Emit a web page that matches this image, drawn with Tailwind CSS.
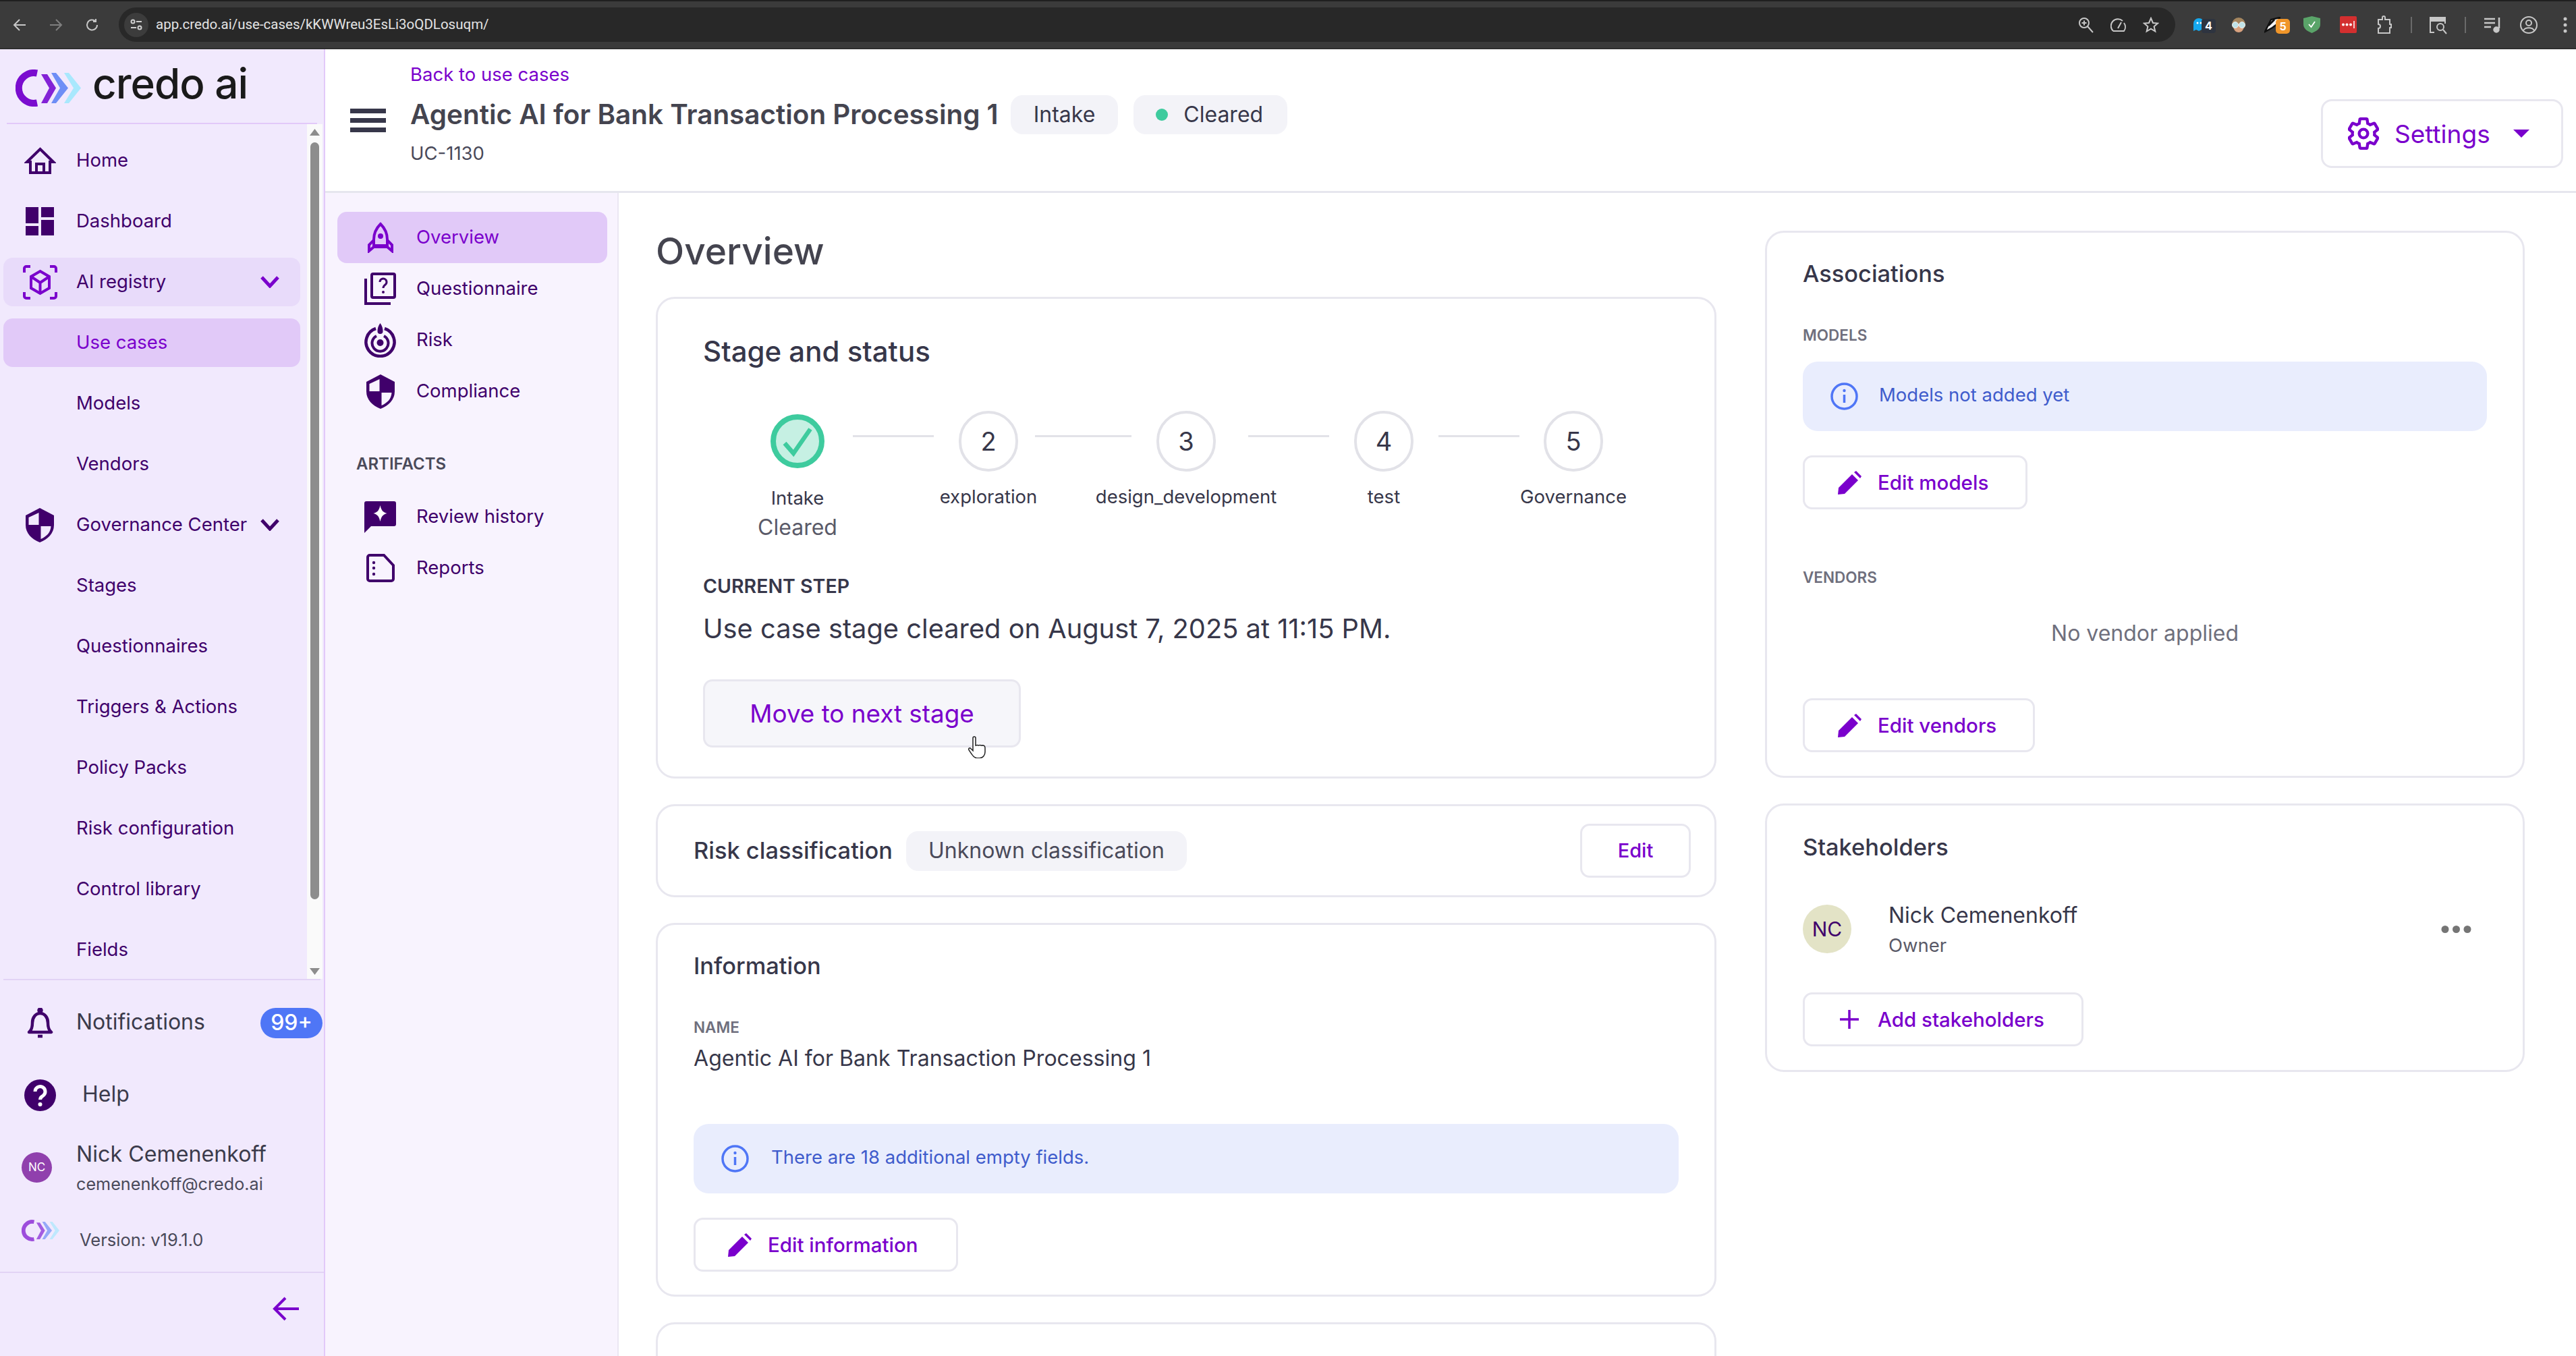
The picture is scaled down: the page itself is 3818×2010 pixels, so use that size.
<!DOCTYPE html>
<html><head><meta charset="utf-8"><script src="https://cdn.jsdelivr.net/npm/@tailwindcss/browser@4"></script></head>
<body class="m-0">
<div class="w-[3818px] h-[2010px] overflow-hidden flex flex-col bg-white font-[Inter,sans-serif] text-[#37374a]">

<!-- browser chrome -->
<div class="h-[73px] shrink-0 bg-[#3b3b3b] border-t-2 border-t-[#1f1f1f] border-b-2 border-b-[#2f2f2f] flex items-center overflow-hidden">
  <div class="w-[176px] shrink-0 flex items-center">
    <svg class="ml-[19px]" width="20" height="20" viewBox="0 0 20 20" fill="none" stroke="#c7c7c7" stroke-width="2"><path d="M19 10H2M10 2l-8 8 8 8"/></svg>
    <svg class="ml-[34px]" width="20" height="20" viewBox="0 0 20 20" fill="none" stroke="#7f7f7f" stroke-width="2"><path d="M1 10h17M10 2l8 8-8 8"/></svg>
    <svg class="ml-[34px]" width="20" height="20" viewBox="0 0 20 20" fill="none" stroke="#c7c7c7" stroke-width="2"><path d="M17 10a7.500 7.500 0 1 1-2.500-5.600M15 1v4h-4"/></svg>
  </div>
  <div class="w-[3048px] h-[51px] shrink-0 rounded-full bg-[#282828] flex items-center relative">
    <div class="ml-[8px] w-[36px] h-[36px] rounded-full bg-[#3c3c3c] flex items-center justify-center">
      <svg width="20" height="20" viewBox="0 0 20 20" fill="none" stroke="#d0d0d0" stroke-width="2"><circle cx="5" cy="5" r="2.500"/><path d="M10 5h8M2 14h8"/><circle cx="15" cy="14" r="2.500"/></svg>
    </div>
    <span class="ml-[11px] text-[20.5px] leading-none text-[#e3e3e3] font-[Roboto,sans-serif]">app.credo.ai/use-cases/kKWWreu3EsLi3oQDLosuqm/</span>
    <div class="ml-auto mr-[24px] flex items-center gap-[24px]">
      <svg width="24" height="24" viewBox="0 0 24 24" fill="none" stroke="#c7c7c7" stroke-width="2"><circle cx="9" cy="9" r="7"/><path d="M14 14l8 9M9 5.500v7M5.500 9h7"/></svg>
      <svg width="24" height="24" viewBox="0 0 24 24" fill="none" stroke="#c7c7c7" stroke-width="2"><path d="M4 21a10 10 0 0 1 14-15M20 9a10 10 0 0 1 0 12H4M11 17l5-9"/></svg>
      <svg width="24" height="24" viewBox="0 0 24 24" fill="none" stroke="#c7c7c7" stroke-width="2"><path d="M12 2l3 7 7 .6-5.400 4.700 1.700 7.200L12 17.600l-6.300 3.900 1.700-7.200L2 9.600 9 9z"/></svg>
    </div>
  </div>
  <div class="ml-[13px] flex items-center shrink-0">
    <div class="w-[54px] h-[40px] shrink-0 flex items-center justify-center relative">
      <svg class="-ml-[10px]" width="18" height="22" viewBox="0 0 18 22"><path d="M1 20V9a8 8 0 0 1 16 0v11l-4-2-4 2-4-2z" fill="#15a8ee"/><circle cx="7" cy="8" r="1.500" fill="#fff"/><circle cx="12" cy="8" r="1.500" fill="#fff"/></svg>
      <span class="absolute left-[26px] top-[11px] w-[21px] h-[21px] rounded-[4px] bg-[#2e3440] text-white text-[16px] font-bold flex items-center justify-center">4</span>
    </div>
    <div class="w-[54px] h-[40px] shrink-0 flex items-center justify-center">
      <svg width="24" height="22" viewBox="0 0 24 22"><ellipse cx="12" cy="10" rx="10" ry="10" fill="#a5865f"/><ellipse cx="12" cy="16" rx="7" ry="6" fill="#d9a27f"/><circle cx="7" cy="11" r="4.500" fill="#bfe3e8" stroke="#eee"/><circle cx="17" cy="11" r="4.500" fill="#bfe3e8" stroke="#eee"/></svg>
    </div>
    <div class="w-[54px] h-[40px] shrink-0 flex items-center justify-center relative">
      <svg class="-ml-[8px]" width="24" height="24" viewBox="0 0 24 24"><path d="M1 22 L10 4 L23 1 L20 10 L12 16Z" fill="#f4f4f4" stroke="#111" stroke-width="2.500"/><path d="M6 13l9-9" stroke="#111" stroke-width="3"/></svg>
      <span class="absolute left-[28px] top-[11px] w-[21px] h-[22px] rounded-[5px] bg-[#f0962a] text-white text-[16px] font-bold flex items-center justify-center">5</span>
    </div>
    <div class="w-[54px] h-[40px] shrink-0 flex items-center justify-center">
      <svg width="25" height="25" viewBox="0 0 25 25"><path d="M12.500 0L25 3v9c0 6-5 10-12.500 13C5 22 0 18 0 12V3z" fill="#5aa469"/><path d="M8 12l3.500 4L17 8" stroke="#fff" stroke-width="1.800" fill="none"/></svg>
    </div>
    <div class="w-[54px] h-[40px] shrink-0 flex items-center justify-center">
      <svg width="25" height="25" viewBox="0 0 25 25"><rect width="25" height="25" rx="2" fill="#d32f2f"/><circle cx="5" cy="12.500" r="2" fill="#fff"/><circle cx="10.500" cy="12.500" r="2" fill="#fff"/><circle cx="16" cy="12.500" r="2" fill="#fff"/><path d="M21 7v11" stroke="#fff" stroke-width="1.500"/></svg>
    </div>
    <div class="w-[54px] h-[40px] shrink-0 flex items-center justify-center">
      <svg width="24" height="28" viewBox="0 0 24 28" fill="none" stroke="#c7c7c7" stroke-width="2"><path d="M3 6h6V3a2 2 0 0 1 4 0v3h7v7h2v5h-2v8H3v-7a3 3 0 0 0 0-6z"/></svg>
    </div>
    <div class="w-[26px] shrink-0 flex justify-center"><div class="w-[2px] h-[24px] bg-[#6a6a6a]"></div></div>
    <div class="w-[54px] h-[40px] shrink-0 flex items-center justify-center">
      <svg width="28" height="28" viewBox="0 0 28 28" fill="none" stroke="#c7c7c7" stroke-width="2"><path d="M8 25H2V3h22v9"/><path d="M2 3h22v5H2z" fill="#c7c7c7"/><circle cx="17" cy="17" r="5"/><path d="M21 21l5 6"/></svg>
    </div>
    <div class="w-[26px] shrink-0 flex justify-center"><div class="w-[2px] h-[24px] bg-[#6a6a6a]"></div></div>
    <div class="w-[54px] h-[40px] shrink-0 flex items-center justify-center">
      <svg width="26" height="26" viewBox="0 0 26 26" fill="none" stroke="#c7c7c7" stroke-width="2.500"><path d="M1 4h16M1 10h16M1 16h10M23 2v16"/><circle cx="19" cy="20" r="3.500" fill="#c7c7c7"/></svg>
    </div>
    <div class="w-[54px] h-[40px] shrink-0 flex items-center justify-center">
      <svg width="26" height="26" viewBox="0 0 26 26" fill="none" stroke="#c7c7c7" stroke-width="2"><circle cx="13" cy="13" r="12"/><circle cx="13" cy="10" r="4"/><path d="M5 21c3-5 13-5 16 0"/></svg>
    </div>
    <div class="w-[54px] h-[40px] shrink-0 flex items-center justify-center">
      <svg width="6" height="24" viewBox="0 0 6 24" fill="#c7c7c7"><circle cx="3" cy="3" r="2.500"/><circle cx="3" cy="12" r="2.500"/><circle cx="3" cy="21" r="2.500"/></svg>
    </div>
  </div>
</div>

<div class="flex-1 flex min-h-0">
<!-- sidebar -->
<aside class="w-[482px] shrink-0 bg-[#f1e9fd] border-r-2 border-r-[#e2c9f9] flex flex-col">
  <div class="h-[109px] shrink-0 flex items-start pt-[24px] pl-[23px] relative">
    <svg width="97" height="55" viewBox="0 0 97 55" class="mt-[6px]"><path d="M32 5.500A22.500 22.500 0 1 0 32 49.500" fill="none" stroke="#7a0ccf" stroke-width="10"/><path d="M38 7h9l13 20.500L47 50h-9l12-22.500z" fill="#8322d6"/><path d="M53 5h7l18 22.500L60 50h-7l13-22.500z" fill="#6e8ef6"/><path d="M72 5h7l18 22.500L79 50h-7l14-22.500z" fill="#a9e8fd"/></svg>
    <span class="ml-[17px] text-[62px] leading-[54px] font-medium text-[#1a1a1a] tracking-[-1px]">credo ai</span>
  </div>
  <div class="h-[2px] mx-[10px] bg-[#e2c9f9] shrink-0"></div>

  <nav class="h-[1267px] shrink-0 relative overflow-hidden pt-[18px] text-[27.5px] text-[#40006b]">
    <a class="flex items-center h-[72px] mb-[18px] ml-[5px] w-[440px] rounded-[14px]"><span class="w-[108px] flex justify-center"><svg width="47" height="40" viewBox="0 0 47 40" fill="none" stroke="#40006b" stroke-width="4"><path d="M23.500 3L43 22h-5v16H9V22H4z"/><path d="M18 38V25h11v13"/></svg></span>Home</a>
    <a class="flex items-center h-[72px] mb-[18px] ml-[5px] w-[440px] rounded-[14px]"><span class="w-[108px] flex justify-center"><svg width="42" height="42" viewBox="0 0 42 42" fill="#40006b"><rect width="19" height="24"/><rect x="23" width="19" height="15"/><rect y="28" width="19" height="14"/><rect x="23" y="19" width="19" height="23"/></svg></span>Dashboard</a>
    <a class="flex items-center h-[72px] mb-[18px] ml-[5px] w-[440px] rounded-[14px] bg-[#e8dbfa]"><span class="w-[108px] flex justify-center"><svg width="51" height="51" viewBox="0 0 51 51" fill="none" stroke="#7a00cc" stroke-width="4"><path d="M2 11V5a3 3 0 0 1 3-3h6M40 2h6a3 3 0 0 1 3 3v6M49 40v6a3 3 0 0 1-3 3h-6M11 49H5a3 3 0 0 1-3-3v-6"/><path d="M25.500 9L39 17v17l-13.500 8L12 34V17z"/><path d="M12 17l13.500 9L39 17M25.500 26v16"/></svg></span>AI registry<svg class="ml-auto mr-[31px]" width="28" height="18" viewBox="0 0 28 18" fill="none" stroke="#7a00cc" stroke-width="5"><path d="M2 2l12 13L26 2"/></svg></a>
    <a class="flex items-center h-[72px] mb-[18px] ml-[5px] w-[440px] rounded-[14px] bg-[#e1c9f8] text-[#7a00cc]"><span class="w-[108px]"></span>Use cases</a>
    <a class="flex items-center h-[72px] mb-[18px] ml-[5px] w-[440px]"><span class="w-[108px]"></span>Models</a>
    <a class="flex items-center h-[72px] mb-[18px] ml-[5px] w-[440px]"><span class="w-[108px]"></span>Vendors</a>
    <a class="flex items-center h-[72px] mb-[18px] ml-[5px] w-[440px]"><span class="w-[108px] flex justify-center"><svg width="42" height="51" viewBox="0 0 42 51"><path d="M21 0L42 11v14c0 13-9 21-21 26C9 46 0 38 0 25V11z" fill="#40006b"/><path d="M19.500 7L4.500 14v11h15z" fill="#f1e9fd"/><path d="M22.500 27h15c-.5 9-6 15-15 19z" fill="#f1e9fd"/></svg></span>Governance Center<svg class="ml-auto mr-[31px]" width="28" height="18" viewBox="0 0 28 18" fill="none" stroke="#40006b" stroke-width="5"><path d="M2 2l12 13L26 2"/></svg></a>
    <a class="flex items-center h-[72px] mb-[18px] ml-[5px] w-[440px]"><span class="w-[108px]"></span>Stages</a>
    <a class="flex items-center h-[72px] mb-[18px] ml-[5px] w-[440px]"><span class="w-[108px]"></span>Questionnaires</a>
    <a class="flex items-center h-[72px] mb-[18px] ml-[5px] w-[440px]"><span class="w-[108px]"></span>Triggers &amp; Actions</a>
    <a class="flex items-center h-[72px] mb-[18px] ml-[5px] w-[440px]"><span class="w-[108px]"></span>Policy Packs</a>
    <a class="flex items-center h-[72px] mb-[18px] ml-[5px] w-[440px]"><span class="w-[108px]"></span>Risk configuration</a>
    <a class="flex items-center h-[72px] mb-[18px] ml-[5px] w-[440px]"><span class="w-[108px]"></span>Control library</a>
    <a class="flex items-center h-[72px] mb-[18px] ml-[5px] w-[440px]"><span class="w-[108px]"></span>Fields</a>
    <div class="absolute left-[455px] top-0 w-[23px] h-full bg-[#fafafa]">
      <svg class="absolute left-[4px] top-[7px]" width="15" height="10" viewBox="0 0 15 10" fill="#8d8d8d"><path d="M7.500 0L15 10H0z"/></svg>
      <div class="absolute left-[5px] top-[27px] w-[13px] h-[1122px] rounded-full bg-[#8d8d8d]"></div>
      <svg class="absolute left-[4px] top-[1251px]" width="15" height="10" viewBox="0 0 15 10" fill="#8d8d8d"><path d="M0 0h15L7.500 10z"/></svg>
    </div>
  </nav>

  <div class="h-[2px] mx-[5px] bg-[#e2d3f5] shrink-0"></div>
  <div class="h-[126px] shrink-0 flex items-center relative">
    <span class="w-[113px] flex justify-center pl-[6px]"><svg width="39" height="45" viewBox="0 0 39 45" fill="none" stroke="#40006b" stroke-width="4.500"><path d="M3 36c4-3 5-8 5-14 0-8 5-14 11.500-14S31 14 31 22c0 6 1 11 5 14z" stroke-linejoin="round"/><circle cx="19.500" cy="3.500" r="2" fill="#40006b"/><path d="M16 42h7"/></svg></span>
    <span class="text-[32px] text-[#3b3b4b] -mt-[3px]">Notifications</span>
    <span class="absolute left-[386px] top-[41px] w-[92px] h-[45px] pb-[2px] rounded-full bg-[#4f76f6] text-white text-[32px] font-medium flex items-center justify-center">99+</span>
  </div>
  <div class="h-[72px] shrink-0 flex items-center mt-[8px]">
    <span class="w-[122px] flex justify-center pr-[3px]"><svg width="47" height="47" viewBox="0 0 47 47"><circle cx="23.500" cy="23.500" r="23.500" fill="#40006b"/><path d="M16 18a7.500 7.500 0 1 1 12 6c-3 2-4.500 3-4.500 6" fill="none" stroke="#fff" stroke-width="5"/><circle cx="23.500" cy="37" r="3" fill="#fff"/></svg></span>
    <span class="text-[32px] text-[#3b3b4b] -mt-[2px]">Help</span>
  </div>
  <div class="flex items-center h-[90px] mt-[29px] shrink-0">
    <span class="ml-[32px] mb-[5px] w-[45px] h-[45px] rounded-full bg-[#9040ad] text-white text-[17px] flex items-center justify-center shrink-0">NC</span>
    <div class="ml-[36px]">
      <div class="text-[32.2px] leading-[45px] text-[#3b3b4b]">Nick Cemenenkoff</div>
      <div class="text-[25.2px] leading-[45px] text-[#4a4a5a]">cemenenkoff@credo.ai</div>
    </div>
  </div>
  <div class="h-[107px] shrink-0 flex items-start">
    <svg class="ml-[32px] mt-[30px] opacity-70" width="56" height="32" viewBox="0 0 97 55"><path d="M32 5.500A22.500 22.500 0 1 0 32 49.500" fill="none" stroke="#7a0ccf" stroke-width="10"/><path d="M38 7h9l13 20.500L47 50h-9l12-22.500z" fill="#8322d6"/><path d="M53 5h7l18 22.500L60 50h-7l13-22.500z" fill="#6e8ef6"/><path d="M72 5h7l18 22.500L79 50h-7l14-22.500z" fill="#a9e8fd"/></svg>
    <span class="ml-[30px] mt-[45px] text-[25.5px] leading-[30px] text-[#4a4a5a]">Version: v19.1.0</span>
  </div>
  <div class="h-[2px] bg-[#e2d3f5] shrink-0"></div>
  <div class="flex-1 flex items-start justify-end pr-[37px] pt-[35px]">
    <svg width="39" height="36" viewBox="0 0 39 36" fill="none" stroke="#7a00cc" stroke-width="4"><path d="M39 18H3M19 2L3 18l16 16"/></svg>
  </div>
</aside>

<!-- main -->
<div class="flex-1 flex flex-col min-w-0">
  <header class="h-[213px] shrink-0 border-b-[3px] border-b-[#e6e6ee] flex relative">
    <div class="w-[126px] shrink-0 flex justify-center pt-[88px] pl-[0px]">
      <svg width="53" height="35" viewBox="0 0 53 35" fill="#37374a"><rect width="53" height="7"/><rect y="14" width="53" height="7"/><rect y="28" width="53" height="7"/></svg>
    </div>
    <div class="pt-[21px]">
      <div class="text-[27.5px] leading-[32px] text-[#7a00cc]">Back to use cases</div>
      <div class="flex items-center mt-[15px]">
        <span class="text-[40.4px] leading-[58px] font-semibold text-[#44444f]">Agentic AI for Bank Transaction Processing 1</span>
        <span class="ml-[18px] h-[58px] px-[34px] rounded-[18px] bg-[#f3f3f8] text-[32px] flex items-center">Intake</span>
        <span class="ml-[23px] h-[58px] pl-[33px] pr-[36px] rounded-[18px] bg-[#f3f3f8] text-[32px] flex items-center"><span class="w-[18px] h-[18px] rounded-full bg-[#3ecb9e] mr-[23px]"></span>Cleared</span>
      </div>
      <div class="text-[27.5px] leading-[32px] mt-[12px] text-[#4a4a5a]">UC-1130</div>
    </div>
    <div class="ml-auto mr-[19px] mt-[74px] w-[359px] h-[102px] border-[3px] border-[#e8e7ef] rounded-[16px] flex items-center">
      <svg class="ml-[37px]" width="46" height="50" viewBox="2 1 20 22" fill="none" stroke="#7a00cc" stroke-width="1.900"><path d="M19.140 12.940c.04-.3.06-.61.06-.94 0-.32-.02-.64-.07-.94l2.030-1.580a.49.49 0 0 0 .12-.61l-1.920-3.320a.488.488 0 0 0-.59-.22l-2.390.96c-.5-.38-1.030-.7-1.620-.94l-.36-2.540a.484.484 0 0 0-.48-.41h-3.840c-.24 0-.43.17-.47.41l-.36 2.540c-.59.24-1.130.57-1.620.94l-2.390-.96c-.22-.08-.47 0-.59.22L2.740 8.870c-.12.21-.08.47.12.61l2.030 1.580c-.05.3-.09.63-.09.94s.02.64.07.94l-2.030 1.580a.49.49 0 0 0-.12.61l1.920 3.320c.12.22.37.29.59.22l2.390-.96c.5.38 1.030.7 1.620.94l.36 2.540c.05.24.24.41.48.41h3.840c.24 0 .44-.17.47-.41l.36-2.540c.59-.24 1.130-.56 1.620-.94l2.390.96c.22.08.47 0 .59-.22l1.920-3.320c.12-.22.07-.47-.12-.61l-2.010-1.580z"/><circle cx="12" cy="12" r="2.800"/></svg>
      <span class="ml-[23px] text-[37px] leading-none text-[#7a00cc]">Settings</span>
      <svg class="ml-[34px]" width="24" height="12" viewBox="0 0 24 12" fill="#7a00cc"><path d="M0 0h24L12 12z"/></svg>
    </div>
  </header>

  <div class="flex-1 flex min-h-0">
    <!-- sub nav -->
    <div class="w-[435px] shrink-0 bg-[#f8f3fe] border-r-2 border-r-[#ebe6f3] pt-[28px] text-[27.5px] text-[#40006b]">
      <a class="flex items-center h-[76px] ml-[18px] w-[400px] rounded-[14px] bg-[#e1c9f8] text-[#7a00cc]"><span class="w-[117px] flex justify-center pl-[10px]"><svg width="38" height="46" viewBox="0 0 38 46" fill="none" stroke="#7a00cc" stroke-width="4"><path d="M19 3c7 7 10 15 10 23v9H9v-9C9 18 12 10 19 3z"/><path d="M9 27l-7 7v9l7-6h20l7 6v-9l-7-7"/><circle cx="19" cy="21" r="4" fill="#7a00cc" stroke="none"/></svg></span>Overview</a>
      <a class="flex items-center h-[76px] ml-[18px] w-[400px]"><span class="w-[117px] flex justify-center pl-[10px]"><svg width="47" height="48" viewBox="0 0 47 48" fill="none" stroke="#40006b" stroke-width="4"><rect x="11" y="2" width="34" height="35" rx="2"/><path d="M2 9v37h37"/><path d="M23 14a5 5 0 1 1 8 4c-2 1.500-3 2.500-3 5" stroke-width="3"/><circle cx="28" cy="29" r="2" fill="#40006b" stroke="none"/></svg></span>Questionnaire</a>
      <a class="flex items-center h-[76px] ml-[18px] w-[400px]"><span class="w-[117px] flex justify-center pl-[10px]"><svg width="47" height="51" viewBox="0 0 47 51" fill="none" stroke="#40006b"><path d="M17 8A21 21 0 1 0 30 8" stroke-width="4.500"/><path d="M18 19A12 12 0 1 0 29 19" stroke-width="4"/><circle cx="23.500" cy="29" r="5" fill="#40006b" stroke="none"/><path d="M23.500 0c3 4 4 8 4 12a4 4 0 0 1-8 0c0-4 1-8 4-12z" fill="#40006b" stroke="none"/></svg></span>Risk</a>
      <a class="flex items-center h-[76px] ml-[18px] w-[400px]"><span class="w-[117px] flex justify-center pl-[10px]"><svg width="42" height="51" viewBox="0 0 42 51"><path d="M21 0L42 11v14c0 13-9 21-21 26C9 46 0 38 0 25V11z" fill="#40006b"/><path d="M19.500 7L4.500 14v11h15z" fill="#f8f3fe"/><path d="M22.500 27h15c-.5 9-6 15-15 19z" fill="#f8f3fe"/></svg></span>Compliance</a>
      <div class="ml-[46px] mt-[55px] text-[24px] leading-[30px] font-semibold text-[#4a4a5a]">ARTIFACTS</div>
      <a class="flex items-center h-[76px] ml-[18px] w-[400px] mt-[25px]"><span class="w-[117px] flex justify-center pl-[10px]"><svg width="47" height="47" viewBox="0 0 47 47"><path d="M3 0h41a3 3 0 0 1 3 3v31a3 3 0 0 1-3 3H10L0 47V3a3 3 0 0 1 3-3z" fill="#40006b"/><path d="M23.500 6c1.500 7 3.500 10 10 12-6.500 2-8.500 5-10 12-1.500-7-3.500-10-10-12 6.500-2 8.500-5 10-12z" fill="#fff"/></svg></span>Review history</a>
      <a class="flex items-center h-[76px] ml-[18px] w-[400px]"><span class="w-[117px] flex justify-center pl-[10px]"><svg width="42" height="42" viewBox="0 0 42 42" fill="none" stroke="#40006b" stroke-width="4"><path d="M5 2h21l14 15v20a3 3 0 0 1-3 3H5a3 3 0 0 1-3-3V5a3 3 0 0 1 3-3z"/><circle cx="11" cy="13" r="2.200" fill="#40006b" stroke="none"/><circle cx="11" cy="21" r="2.200" fill="#40006b" stroke="none"/><circle cx="11" cy="30" r="2.200" fill="#40006b" stroke="none"/></svg></span>Reports</a>
    </div>

    <!-- content -->
    <div class="flex-1 flex pl-[55px] pt-[56px] gap-[72px] overflow-hidden">
      <div class="w-[1572px] shrink-0 flex flex-col gap-[38px]">
        <h1 class="h-[60px] -mb-[38px] leading-[60px] text-[55px] font-medium text-[#44444f]">Overview</h1>
        <section class="mt-[38px] h-[714px] shrink-0 border-[3px] border-[#e8e7ef] rounded-[28px] px-[67px] pt-[54px] relative">
          <h2 class="text-[42px] leading-[50px] font-medium -mt-[1px] mb-[1px]">Stage and status</h2>
          <div class="flex items-start mt-[63px] ml-[96px]">
            <div class="w-[88px] flex flex-col items-center">
              <div class="h-[90px] flex items-center"><svg width="82" height="82" viewBox="0 0 82 82"><circle cx="41" cy="41" r="36" fill="#c6f0e3" stroke="#3ecb9e" stroke-width="8"/><path d="M22 44l13 15 25-36" fill="none" stroke="#3ecb9e" stroke-width="6.500"/></svg></div>
              <div class="mt-[17px] whitespace-nowrap text-[27.5px] leading-[44px]">Intake</div>
              <div class="whitespace-nowrap text-[32px] leading-[44px] text-[#5a5a68]">Cleared</div>
            </div>
            <div class="ml-[38px] mr-[37px] mt-[36px] w-[120px] h-[3px] bg-[#e2e2e8]"></div>
            <div class="w-[88px] flex flex-col items-center">
              <div class="w-[88px] h-[90px] rounded-full border-[4px] border-[#e2e2e8] flex items-center justify-center text-[38px]">2</div>
              <div class="mt-[15px] whitespace-nowrap text-[27.5px] leading-[44px]">exploration</div>
            </div>
            <div class="ml-[25px] mr-[37px] mt-[36px] w-[143px] h-[3px] bg-[#e2e2e8]"></div>
            <div class="w-[88px] flex flex-col items-center">
              <div class="w-[88px] h-[90px] rounded-full border-[4px] border-[#e2e2e8] flex items-center justify-center text-[38px]">3</div>
              <div class="mt-[15px] whitespace-nowrap text-[27.5px] leading-[44px]">design_development</div>
            </div>
            <div class="ml-[48px] mr-[37px] mt-[36px] w-[120px] h-[3px] bg-[#e2e2e8]"></div>
            <div class="w-[88px] flex flex-col items-center">
              <div class="w-[88px] h-[90px] rounded-full border-[4px] border-[#e2e2e8] flex items-center justify-center text-[38px]">4</div>
              <div class="mt-[15px] whitespace-nowrap text-[27.5px] leading-[44px]">test</div>
            </div>
            <div class="ml-[37px] mr-[36px] mt-[36px] w-[120px] h-[3px] bg-[#e2e2e8]"></div>
            <div class="w-[88px] flex flex-col items-center">
              <div class="w-[88px] h-[90px] rounded-full border-[4px] border-[#e2e2e8] flex items-center justify-center text-[38px]">5</div>
              <div class="mt-[15px] whitespace-nowrap text-[27.5px] leading-[44px]">Governance</div>
            </div>
          </div>
          <div class="mt-[47px] text-[28.5px] leading-[36px] font-semibold">CURRENT STEP</div>
          <p class="mt-[20px] text-[39.8px] leading-[50px]">Use case stage cleared on August 7, 2025 at 11:15 PM.</p>
          <div class="relative mt-[50px] w-[471px] h-[101px] bg-[#f6f6fa] border-[3px] border-[#e8e7ef] rounded-[14px] flex items-center justify-center text-[36.8px] text-[#7a00cc]">Move to next stage
            <svg class="absolute left-[390px] top-[81px]" width="28" height="33" viewBox="0 0 28 33" fill="#fff" stroke="#222" stroke-width="1.500"><path d="M9 1a2 2 0 0 1 2 2v11l2-.5a2 2 0 0 1 2 .5l2-.5a2 2 0 0 1 2 .5l2-.3c3 0 4 2 4 4v6c0 4-3 9-8 9h-4c-4 0-6-3-8-6l-4-6c-1-2 1-4 3-2l3 3V3a2 2 0 0 1 2-2z"/></svg>
          </div>
        </section>

        <section class="h-[138px] shrink-0 border-[3px] border-[#e8e7ef] rounded-[28px] pl-[53px] pr-[35px] flex items-center">
          <span class="text-[34.4px] font-medium">Risk classification</span>
          <span class="ml-[20px] h-[59px] px-[33px] rounded-[18px] bg-[#f3f3f8] text-[32px] text-[#4a4a5a] flex items-center">Unknown classification</span>
          <span class="ml-auto w-[164px] h-[80px] border-[3px] border-[#e8e7ef] rounded-[14px] flex items-center justify-center text-[29px] font-medium text-[#7a00cc]">Edit</span>
        </section>

        <section class="h-[554px] shrink-0 border-[3px] border-[#e8e7ef] rounded-[28px] px-[53px] pt-[39px]">
          <h3 class="text-[34.4px] leading-[44px] font-medium">Information</h3>
          <div class="mt-[54px] text-[22.5px] leading-[30px] font-semibold text-[#6f6f7d]">NAME</div>
          <div class="mt-[9px] text-[32.1px] leading-[44px]">Agentic AI for Bank Transaction Processing 1</div>
          <div class="mt-[75px] h-[103px] bg-[#e9edfd] rounded-[22px] flex items-center pl-[41px]">
            <svg width="41" height="41" viewBox="0 0 41 41" fill="none" stroke="#4f76f6" stroke-width="3.500"><circle cx="20.500" cy="20.500" r="18.500"/><path d="M20.500 18v12"/><circle cx="20.500" cy="12" r="2.200" fill="#4f76f6" stroke="none"/></svg>
            <span class="ml-[33px] -mt-[4px] text-[27.5px] text-[#3f5ccc]">There are 18 additional empty fields.</span>
          </div>
          <div class="mt-[36px] w-[392px] h-[80px] border-[3px] border-[#e8e7ef] rounded-[14px] flex items-center text-[#7a00cc]">
            <svg class="ml-[48px]" width="35" height="35" viewBox="0 0 35 35" fill="#7a00cc"><path d="M0 35l1-10L21 5l9 9-20 20z"/><path d="M24 2l3-2 8 8-2 3z"/></svg>
            <span class="ml-[24px] text-[29.5px] font-medium">Edit information</span>
          </div>
        </section>
        <section class="h-[200px] shrink-0 border-[3px] border-[#e8e7ef] rounded-[28px]"></section>
      </div>

      <div class="w-[1126px] shrink-0 flex flex-col gap-[38px]">
        <section class="h-[811px] shrink-0 border-[3px] border-[#e8e7ef] rounded-[28px] px-[53px] pt-[39px]">
          <h3 class="text-[34.4px] leading-[44px] font-medium">Associations</h3>
          <div class="mt-[54px] text-[22.5px] leading-[30px] font-semibold text-[#6f6f7d]">MODELS</div>
          <div class="mt-[24px] h-[103px] bg-[#e9edfd] rounded-[22px] flex items-center pl-[41px]">
            <svg width="41" height="41" viewBox="0 0 41 41" fill="none" stroke="#4f76f6" stroke-width="3.500"><circle cx="20.500" cy="20.500" r="18.500"/><path d="M20.500 18v12"/><circle cx="20.500" cy="12" r="2.200" fill="#4f76f6" stroke="none"/></svg>
            <span class="ml-[31px] -mt-[4px] text-[27.5px] text-[#3f5ccc]">Models not added yet</span>
          </div>
          <div class="mt-[36px] w-[333px] h-[80px] border-[3px] border-[#e8e7ef] rounded-[14px] flex items-center text-[#7a00cc]">
            <svg class="ml-[49px]" width="35" height="35" viewBox="0 0 35 35" fill="#7a00cc"><path d="M0 35l1-10L21 5l9 9-20 20z"/><path d="M24 2l3-2 8 8-2 3z"/></svg>
            <span class="ml-[24px] text-[29.5px] font-medium">Edit models</span>
          </div>
          <div class="mt-[86px] text-[22.5px] leading-[30px] font-semibold text-[#6f6f7d]">VENDORS</div>
          <div class="mt-[46px] text-[32px] leading-[44px] text-center text-[#6f6f7d]">No vendor applied</div>
          <div class="mt-[74px] w-[344px] h-[80px] border-[3px] border-[#e8e7ef] rounded-[14px] flex items-center text-[#7a00cc]">
            <svg class="ml-[49px]" width="35" height="35" viewBox="0 0 35 35" fill="#7a00cc"><path d="M0 35l1-10L21 5l9 9-20 20z"/><path d="M24 2l3-2 8 8-2 3z"/></svg>
            <span class="ml-[24px] text-[29.5px] font-medium">Edit vendors</span>
          </div>
        </section>
        <section class="h-[398px] shrink-0 border-[3px] border-[#e8e7ef] rounded-[28px] px-[53px] pt-[40px]">
          <h3 class="text-[34.4px] leading-[44px] font-medium">Stakeholders</h3>
          <div class="mt-[63px] h-[72px] flex items-center">
            <span class="w-[72px] h-[72px] rounded-full bg-[#e3e3c6] text-[#40006b] text-[30px] flex items-center justify-center shrink-0">NC</span>
            <div class="ml-[55px] pt-[4px]">
              <div class="text-[32px] leading-[44px]">Nick Cemenenkoff</div>
              <div class="text-[27.5px] leading-[44px] text-[#5a5a68]">Owner</div>
            </div>
            <svg class="ml-auto mr-[23px]" width="45" height="11" viewBox="0 0 45 11" fill="#757575"><circle cx="6" cy="5.500" r="5.500"/><circle cx="22.500" cy="5.500" r="5.500"/><circle cx="39" cy="5.500" r="5.500"/></svg>
          </div>
          <div class="mt-[58px] w-[416px] h-[80px] border-[3px] border-[#e8e7ef] rounded-[14px] flex items-center text-[#7a00cc]">
            <svg class="ml-[52px]" width="28" height="28" viewBox="0 0 28 28" stroke="#7a00cc" stroke-width="3.500"><path d="M14 0v28M0 14h28"/></svg>
            <span class="ml-[28px] text-[29.5px] font-medium">Add stakeholders</span>
          </div>
        </section>
      </div>
    </div>
  </div>
</div>
</div>
</div>
</body></html>
